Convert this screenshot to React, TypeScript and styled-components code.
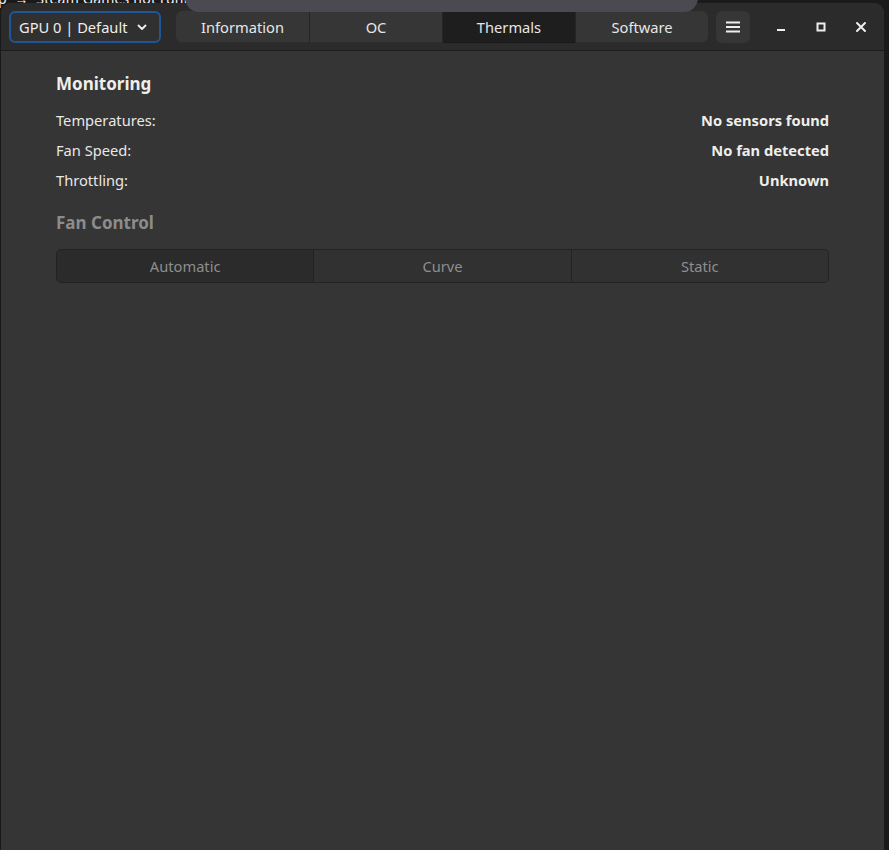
import * as React from 'react';
import styled, { createGlobalStyle } from 'styled-components';

const GlobalStyle = createGlobalStyle`
  html, body {
    margin: 0;
    padding: 0;
    background: #161616;
  }
  body {
    font-family: 'Noto Sans', 'Open Sans', sans-serif;
    font-size: 14.67px;
    color: #eeeeec;
  }
`;

const Desktop = styled.div`
  position: relative;
  width: 889px;
  height: 850px;
  overflow: hidden;
  background: #1a1a1a;
`;

const BehindTitle = styled.div`
  position: absolute;
  left: -2px;
  top: -11px;
  font-size: 14px;
  color: #f2f2f2;
  white-space: nowrap;
  letter-spacing: 0.2px;
`;

const Toast = styled.div`
  position: absolute;
  left: 185px;
  top: -20px;
  width: 513px;
  height: 32px;
  border-radius: 0 0 14px 14px;
  background: #4a4a50;
  z-index: 5;
`;

const Window = styled.div`
  position: relative;
  margin: 3px 5px 0 1px;
  height: 847px;
  border-radius: 10px 10px 0 0;
  background: #353535;
  display: flex;
  flex-direction: column;
  overflow: hidden;
`;

const HeaderBar = styled.div`
  height: 48px;
  flex-shrink: 0;
  background: #2b2b2b;
  border-bottom: 1px solid #1c1c1c;
  display: flex;
  align-items: center;
  padding: 0 8px;
  box-sizing: border-box;
`;

const GpuSelect = styled.button`
  height: 32px;
  width: 152px;
  box-sizing: border-box;
  display: flex;
  align-items: center;
  justify-content: space-between;
  padding: 0 11px 0 8px;
  background: #303030;
  border: 2px solid #1f5599;
  border-radius: 6px;
  color: #eeeeec;
  font-family: inherit;
  font-size: 14.67px;
`;

const Tabs = styled.div`
  display: flex;
  margin-left: 15px;
  height: 32px;
`;

const Tab = styled.div<{ $active?: boolean; $first?: boolean; $last?: boolean }>`
  width: 133px;
  box-sizing: border-box;
  display: flex;
  align-items: center;
  justify-content: center;
  background: ${p => (p.$active ? '#1e1e1e' : '#363636')};
  border-left: ${p => (p.$first ? 'none' : '1px solid #262626')};
  border-radius: ${p => (p.$first ? '6px 0 0 6px' : p.$last ? '0 6px 6px 0' : '0')};
  box-shadow: inset 0 -1px 0 rgba(0, 0, 0, 0.15);
  color: #e6e6e6;
`;

const IconButton = styled.div`
  width: 34px;
  height: 32px;
  margin-left: 8px;
  border-radius: 6px;
  background: #363636;
  display: flex;
  align-items: center;
  justify-content: center;
`;

const WindowControls = styled.div`
  margin-left: auto;
  display: flex;
  align-items: center;
  gap: 16px;
  margin-right: 3px;
`;

const ControlButton = styled.div`
  width: 24px;
  height: 24px;
  display: flex;
  align-items: center;
  justify-content: center;
`;

const Content = styled.div`
  padding: 21px 55px 0 55px;
  display: flex;
  flex-direction: column;
`;

const SectionTitle = styled.div<{ $dim?: boolean }>`
  font-size: 17px;
  font-weight: 700;
  color: ${p => (p.$dim ? '#8c8c8c' : '#eeeeec')};
  line-height: 24px;
`;

const InfoRow = styled.div`
  display: flex;
  justify-content: space-between;
  align-items: center;
  height: 30px;
`;

const Label = styled.span`
  color: #e8e8e8;
`;

const Value = styled.span`
  font-weight: 700;
  color: #eeeeec;
`;

const Spacer = styled.div<{ $h: number }>`
  height: ${p => p.$h}px;
`;

const Segments = styled.div`
  display: flex;
  height: 34px;
  margin-top: 14px;
  border: 1px solid #222222;
  border-radius: 5px;
  overflow: hidden;
  box-sizing: border-box;
`;

const Segment = styled.div<{ $active?: boolean }>`
  flex: 1;
  display: flex;
  align-items: center;
  justify-content: center;
  background: ${p => (p.$active ? '#2b2b2b' : '#313131')};
  color: #8e8e8e;
  & + & {
    border-left: 1px solid #232323;
  }
`;

export default function App() {
  return (
    <Desktop>
      <GlobalStyle />
      <BehindTitle>p&nbsp;&nbsp;→&nbsp;&nbsp;Steam Games not running</BehindTitle>
      <Toast />
      <Window>
        <HeaderBar>
          <GpuSelect>
            <span>GPU 0 | Default</span>
            <svg width="12" height="12" viewBox="0 0 12 12">
              <path d="M2.5 4.5 L6 8 L9.5 4.5" fill="none" stroke="#eeeeec" strokeWidth="1.8" strokeLinecap="round" strokeLinejoin="round" />
            </svg>
          </GpuSelect>
          <Tabs>
            <Tab $first>Information</Tab>
            <Tab>OC</Tab>
            <Tab $active>Thermals</Tab>
            <Tab $last>Software</Tab>
          </Tabs>
          <IconButton>
            <svg width="16" height="16" viewBox="0 0 16 16">
              <rect x="1" y="2.5" width="14" height="2" fill="#eeeeec" />
              <rect x="1" y="7" width="14" height="2" fill="#eeeeec" />
              <rect x="1" y="11.5" width="14" height="2" fill="#eeeeec" />
            </svg>
          </IconButton>
          <WindowControls>
            <ControlButton>
              <svg width="16" height="16" viewBox="0 0 16 16">
                <rect x="4" y="10" width="8" height="2" fill="#eeeeec" />
              </svg>
            </ControlButton>
            <ControlButton>
              <svg width="16" height="16" viewBox="0 0 16 16">
                <rect x="4.5" y="4.5" width="7" height="7" fill="none" stroke="#eeeeec" strokeWidth="2" />
              </svg>
            </ControlButton>
            <ControlButton>
              <svg width="16" height="16" viewBox="0 0 16 16">
                <path d="M4 4 L12 12 M12 4 L4 12" stroke="#eeeeec" strokeWidth="2" strokeLinecap="round" />
              </svg>
            </ControlButton>
          </WindowControls>
        </HeaderBar>
        <Content>
          <SectionTitle>Monitoring</SectionTitle>
          <Spacer $h={9} />
          <InfoRow>
            <Label>Temperatures:</Label>
            <Value>No sensors found</Value>
          </InfoRow>
          <InfoRow>
            <Label>Fan Speed:</Label>
            <Value>No fan detected</Value>
          </InfoRow>
          <InfoRow>
            <Label>Throttling:</Label>
            <Value>Unknown</Value>
          </InfoRow>
          <Spacer $h={16} />
          <SectionTitle $dim>Fan Control</SectionTitle>
          <Segments>
            <Segment $active>Automatic</Segment>
            <Segment>Curve</Segment>
            <Segment>Static</Segment>
          </Segments>
        </Content>
      </Window>
    </Desktop>
  );
}
